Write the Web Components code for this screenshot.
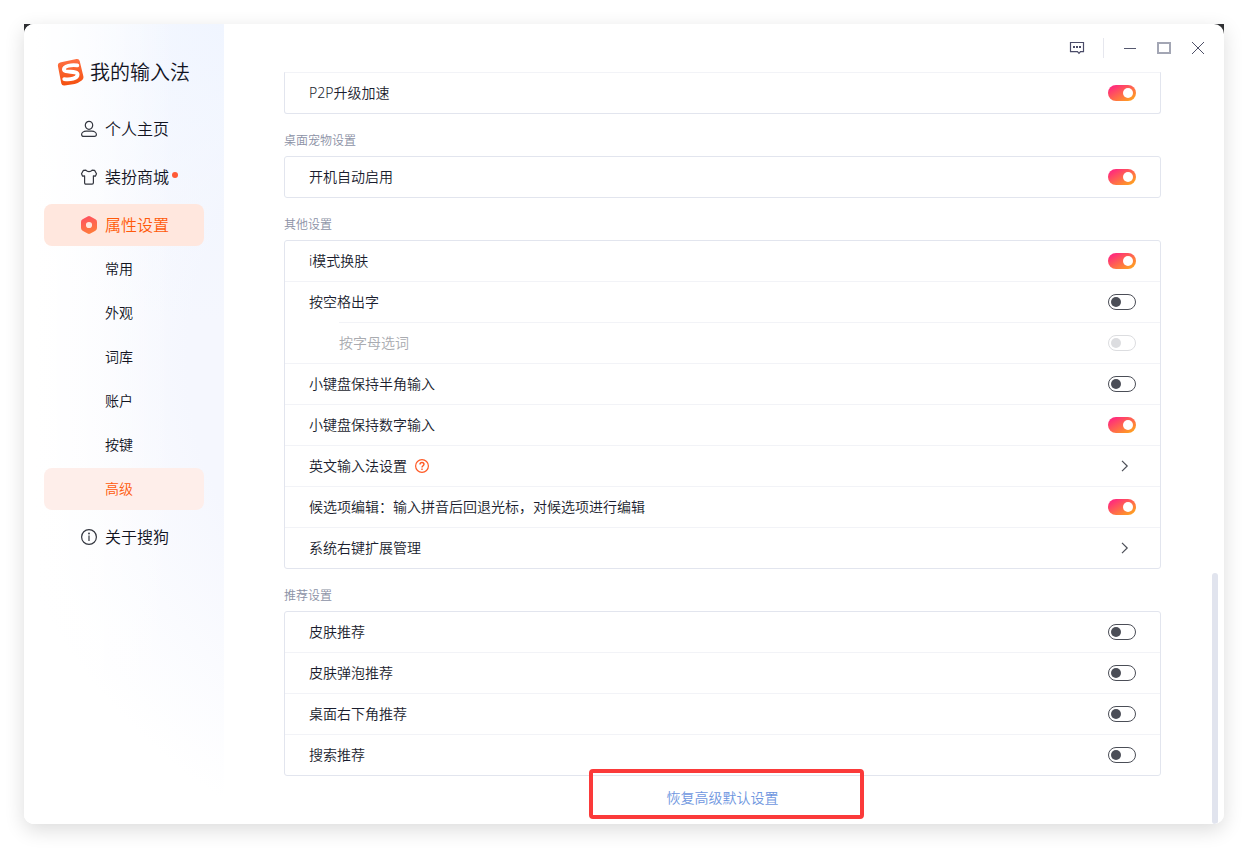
<!DOCTYPE html>
<html lang="zh-CN">
<head>
<meta charset="utf-8">
<meta name="viewport" content="width=device-width, initial-scale=1">
<title>属性设置</title>
<style>
  body { margin: 0; background: #fff; color: #12141f; font: 350 14px/20px "Noto Sans", "Noto Sans CJK SC", sans-serif; }
</style>
</head>
<body>
<ime-window>
  <ime-sidebar slot="side">
    <nav-item icon="user">个人主页</nav-item>
    <nav-item icon="shirt" dot>装扮商城</nav-item>
    <nav-item icon="hex" state="open">属性设置</nav-item>
    <nav-item sub>常用</nav-item>
    <nav-item sub>外观</nav-item>
    <nav-item sub>词库</nav-item>
    <nav-item sub>账户</nav-item>
    <nav-item sub>按键</nav-item>
    <nav-item sub state="current">高级</nav-item>
    <nav-item icon="info">关于搜狗</nav-item>
  </ime-sidebar>
  <settings-group continued>
    <settings-row on>P2P升级加速</settings-row>
  </settings-group>
  <settings-group heading="桌面宠物设置">
    <settings-row on>开机自动启用</settings-row>
  </settings-group>
  <settings-group heading="其他设置">
    <settings-row on>i模式换肤</settings-row>
    <settings-row>按空格出字</settings-row>
    <settings-row child>按字母选词</settings-row>
    <settings-row>小键盘保持半角输入</settings-row>
    <settings-row on>小键盘保持数字输入</settings-row>
    <settings-row link help>英文输入法设置</settings-row>
    <settings-row on>候选项编辑：输入拼音后回退光标，对候选项进行编辑</settings-row>
    <settings-row link>系统右键扩展管理</settings-row>
  </settings-group>
  <settings-group heading="推荐设置">
    <settings-row>皮肤推荐</settings-row>
    <settings-row>皮肤弹泡推荐</settings-row>
    <settings-row>桌面右下角推荐</settings-row>
    <settings-row>搜索推荐</settings-row>
  </settings-group>
  <reset-footer>恢复高级默认设置</reset-footer>
</ime-window>

<script>
const define = (name, render) => customElements.define(name, class extends HTMLElement {
  connectedCallback() {
    if (!this.shadowRoot) this.attachShadow({ mode: 'open' }).innerHTML = render(this);
  }
});

const icons = {
  user: '<g fill="none" stroke="#33363f" stroke-width="1.2"><ellipse cx="8" cy="4.3" rx="3.7" ry="4"/><path d="M5.2 10.200h5.600c2.600 0 4.600 1.500 4.600 3.400 0 1.200-.8 1.800-2 1.800H2.600c-1.200 0-2-.6-2-1.800 0-1.900 2-3.400 4.600-3.400z"/></g>',
  shirt: '<path fill="none" stroke="#33363f" stroke-width="1.2" stroke-linejoin="round" d="M5 1.200c.6 1 1.600 1.400 3 1.400s2.400-.4 3-1.400l2.600.2 1.900 3.400-1.100 2.400-2 -.3v6.900c0 .8-.5 1.300-1.300 1.300H4.900c-.8 0-1.300-.5-1.300-1.300V6.900l-2 .3L.5 4.800l1.900-3.400z"/>',
  hex: '<defs><linearGradient id="g" x1="0" y1="0" x2="0.300" y2="1"><stop stop-color="#ff4d63"/><stop offset="1" stop-color="#ff7a3d"/></linearGradient></defs><path fill="url(#g)" fill-rule="evenodd" d="M6.600-.5q1.400-.8 2.800 0l5 2.800Q16 3.200 16 4.900v6.200q0 1.700-1.600 2.600l-5 2.800q-1.400.8-2.800 0l-5-2.800Q0 12.800 0 11.100V4.900q0-1.700 1.600-2.600zM8 4.900a3.100 3.100 0 1 0 0 6.200 3.100 3.100 0 0 0 0-6.200z"/>',
  info: '<circle cx="8" cy="8" r="7.400" fill="none" stroke="#33363f" stroke-width="1.200"/><path stroke="#33363f" stroke-width="1.200" d="M8 6.500v5.500"/><circle cx="8" cy="4.500" r=".9" fill="#33363f"/>'
};

define('ime-window', () => `
  <style>
    :host { display: block; box-sizing: border-box; min-height: 100vh; padding: 24px; }
    .frame { border-radius: 0 0 10px 10px; background: linear-gradient(#2f3033, #2f3033) 0 0 / 100% 12px no-repeat; box-shadow: 0 6px 20px rgba(0,0,0,.14); }
    .app { display: flex; overflow: hidden; border-radius: 10px; background: #fff; min-height: calc(100vh - 48px); }
    main { flex: 1; min-width: 0; display: flex; flex-direction: column; }
    header { display: flex; align-items: center; justify-content: flex-end; height: 48px; padding-right: 9px; }
    button { display: grid; place-items: center; width: 34px; height: 34px; padding: 0; border: 0; background: none; }
    hr { width: 1px; height: 20px; margin: 0 9px; border: 0; background: #e6e7ee; }
    .view { flex: 1; display: flex; padding: 0 6px 0 60px; }
    .content { flex: 1; min-width: 0; }
    .rail { display: flex; width: 6px; margin-left: 51px; flex-direction: column; }
    .rail::before { content: ""; flex: 2; }
    .thumb { flex: 1; border-radius: 3px; background: #e1e4ee; }
  </style>
  <div class="frame"><div class="app">
    <slot name="side"></slot>
    <main>
      <header>
        <button aria-label="反馈"><svg width="16" height="14" viewBox="0 0 16 14" fill="none" stroke="#4a4b68" stroke-width="1.200"><path d="M1.500 1.500h13v9.200H11.500L10 12.400 8.500 10.700h-7z"/><path stroke-width="2" d="M4 6h2M7 6h2M10 6h2"/></svg></button>
        <hr>
        <button aria-label="最小化"><svg width="14" height="14"><path d="M1 7.500h12" stroke="#55586f"/></svg></button>
        <button aria-label="最大化"><svg width="14" height="14"><path d="M1 2h12v10H1z" fill="none" stroke="#a3a6b4" stroke-width="2"/></svg></button>
        <button aria-label="关闭"><svg width="14" height="14"><path d="M1 1l12 12M13 1L1 13" stroke="#4f5168"/></svg></button>
      </header>
      <div class="view"><div class="content"><slot></slot></div><div class="rail"><div class="thumb"></div></div></div>
    </main>
  </div></div>`);

define('ime-sidebar', () => `
  <style>
    :host { flex: none; display: block; box-sizing: border-box; width: 200px; padding: 34px 20px;
      background: linear-gradient(90deg, #fff 10px, rgba(255,255,255,0) 150px), radial-gradient(circle 300px at 100% 0, #f0f5ff, rgba(245,248,255,0)), radial-gradient(circle 520px at 476px 336px, #f5f7fe 60%, #fff); }
    .brand { display: flex; align-items: center; gap: 6px; height: 28px; margin: 0 0 22px 13px; font-size: 20px; line-height: 28px; color: #12141f; }
    .brand span { padding-top: 2px; }
    nav { display: flex; flex-direction: column; }
  </style>
  <div class="brand">
    <svg width="27" height="28" viewBox="0 0 27 28"><defs><linearGradient id="s" x1="0" y1="0" x2="0" y2="1"><stop stop-color="#ff7043"/><stop offset="1" stop-color="#f4500f"/></linearGradient></defs>
      <path fill="url(#s)" d="M4 4.300L19.500 1.100q2.500-.4 3.200 2l3.600 14.800q.8 3-1.600 4.700-3 2.400-7 3.300L7.500 27.500q-2.500.4-3.200-2L1 8.500Q.3 5 4 4.300z"/>
      <path fill="none" stroke="#fff" stroke-width="3.800" stroke-linecap="round" d="M20.300 7.400C14.500 6.500 6.700 7.900 6.900 11.500c.2 3.900 13.600.5 13.700 5 .1 4-7.600 5.500-13.400 4.600"/></svg>
    <span>我的输入法</span>
  </div>
  <nav><slot></slot></nav>`);

define('nav-item', el => {
  const sub = el.hasAttribute('sub');
  const icon = icons[el.getAttribute('icon')];
  return `
  <style>
    :host { display: block; margin-bottom: 6px; }
    :host([sub]), :host([state=open]) { margin-bottom: 2px; }
    :host([state=current]) { margin-bottom: 6px; }
    a { display: flex; align-items: center; gap: 8px; box-sizing: border-box; height: 42px; padding-left: 37px; border-radius: 8px; color: #12141f; font-size: 16px; text-decoration: none; }
    :host([sub]) a { padding-left: 61px; font-size: 14px; }
    :host([state]) a { color: #ff5a0a; background: #ffe7de; }
    :host([state=current]) a { background: #feeeea; }
    svg { overflow: visible; }
    i { width: 6px; height: 6px; margin: 0 0 4px -5px; border-radius: 50%; background: #ff5a36; }
  </style>
  <a href="#">${icon ? `<svg width="16" height="16" viewBox="0 0 16 16">${icon}</svg>` : ''}<span><slot></slot></span>${el.hasAttribute('dot') ? '<i></i>' : ''}</a>`;
});

define('settings-group', el => `
  <style>
    :host { display: block; }
    h2 { margin: 0; padding: 18px 0 6px; font-size: 12px; line-height: 18px; font-weight: inherit; color: #8b91a5; }
    .card { border: 1px solid #e2e5ee; border-radius: 3px; }
    :host([continued]) .card { border-top-color: #f2f3f7; border-radius: 0 0 3px 3px; }
  </style>
  ${el.hasAttribute('heading') ? `<h2>${el.getAttribute('heading')}</h2>` : ''}
  <div class="card"><slot></slot></div>`);

define('settings-row', el => {
  const link = el.hasAttribute('link');
  const tag = link ? 'button' : 'label';
  const off = el.hasAttribute('child');
  return `
  <style>
    :host { display: block; border-top: 1px solid #f2f3f7; }
    :host(:first-child) { border-top: 0; }
    :host([child]) { margin-left: 54px; }
    label, button { display: flex; align-items: center; box-sizing: border-box; width: 100%; height: 40px; padding: 0 24px; border: 0; background: none; color: #1a1d2e; font: inherit; text-align: left; }
    :host([child]) label { padding-left: 0; color: #a9abb0; }
    .end { margin-left: auto; }
    .help { margin-left: 8px; }
    .chevron { margin-right: 6px; }
    input { appearance: none; position: relative; box-sizing: border-box; width: 28px; height: 16px; margin: 0 0 0 auto; border: 1px solid #4b4e57; border-radius: 8px; background: #fff; }
    input::before { content: ""; position: absolute; top: 2px; left: 2px; width: 10px; height: 10px; border-radius: 50%; background: #4b4e57; }
    input:checked { border: 0; background: linear-gradient(150deg, #ff2e7a 15%, #ff9a26 85%); }
    input:checked::before { top: 3px; left: 15px; background: #fff; }
    input:disabled { border-color: #dcdde0; }
    input:disabled::before { background: #dcdde0; }
  </style>
  <${tag}>
    <span><slot></slot></span>
    ${el.hasAttribute('help') ? '<svg class="help" width="14" height="14" viewBox="0 0 14 14" fill="none" stroke="#ff5a26" stroke-width="1.200"><circle cx="7" cy="7" r="6.400"/><path stroke-width="1.400" d="M5 5.600c0-1.400.9-2.100 2-2.100s2 .7 2 1.800c0 1.300-2 1.500-2 3.100M7 9.400v1.500"/></svg>' : ''}
    ${link
      ? '<svg class="end chevron" width="10" height="12" viewBox="0 0 10 12"><path d="M2 .8l5.200 5.200L2 11.200" fill="none" stroke="#4b4e57" stroke-width="1.200"/></svg>'
      : `<input type="checkbox" role="switch" ${el.hasAttribute('on') ? 'checked' : ''} ${off ? 'disabled' : ''}>`}
  </${tag}>`;
});

define('reset-footer', () => `
  <style>
    :host { position: relative; display: flex; justify-content: center; align-items: center; height: 48px; }
    a { margin-top: -4px; color: #6e96e0; text-decoration: none; }
    .mark { position: absolute; top: -7px; left: calc(50% - 134px); box-sizing: border-box; width: 275px; height: 50px; border: 4px solid #fb3a3a; border-radius: 4px; pointer-events: none; }
  </style>
  <a href="#"><slot></slot></a>
  <div class="mark"></div>`);
</script>
</body>
</html>
